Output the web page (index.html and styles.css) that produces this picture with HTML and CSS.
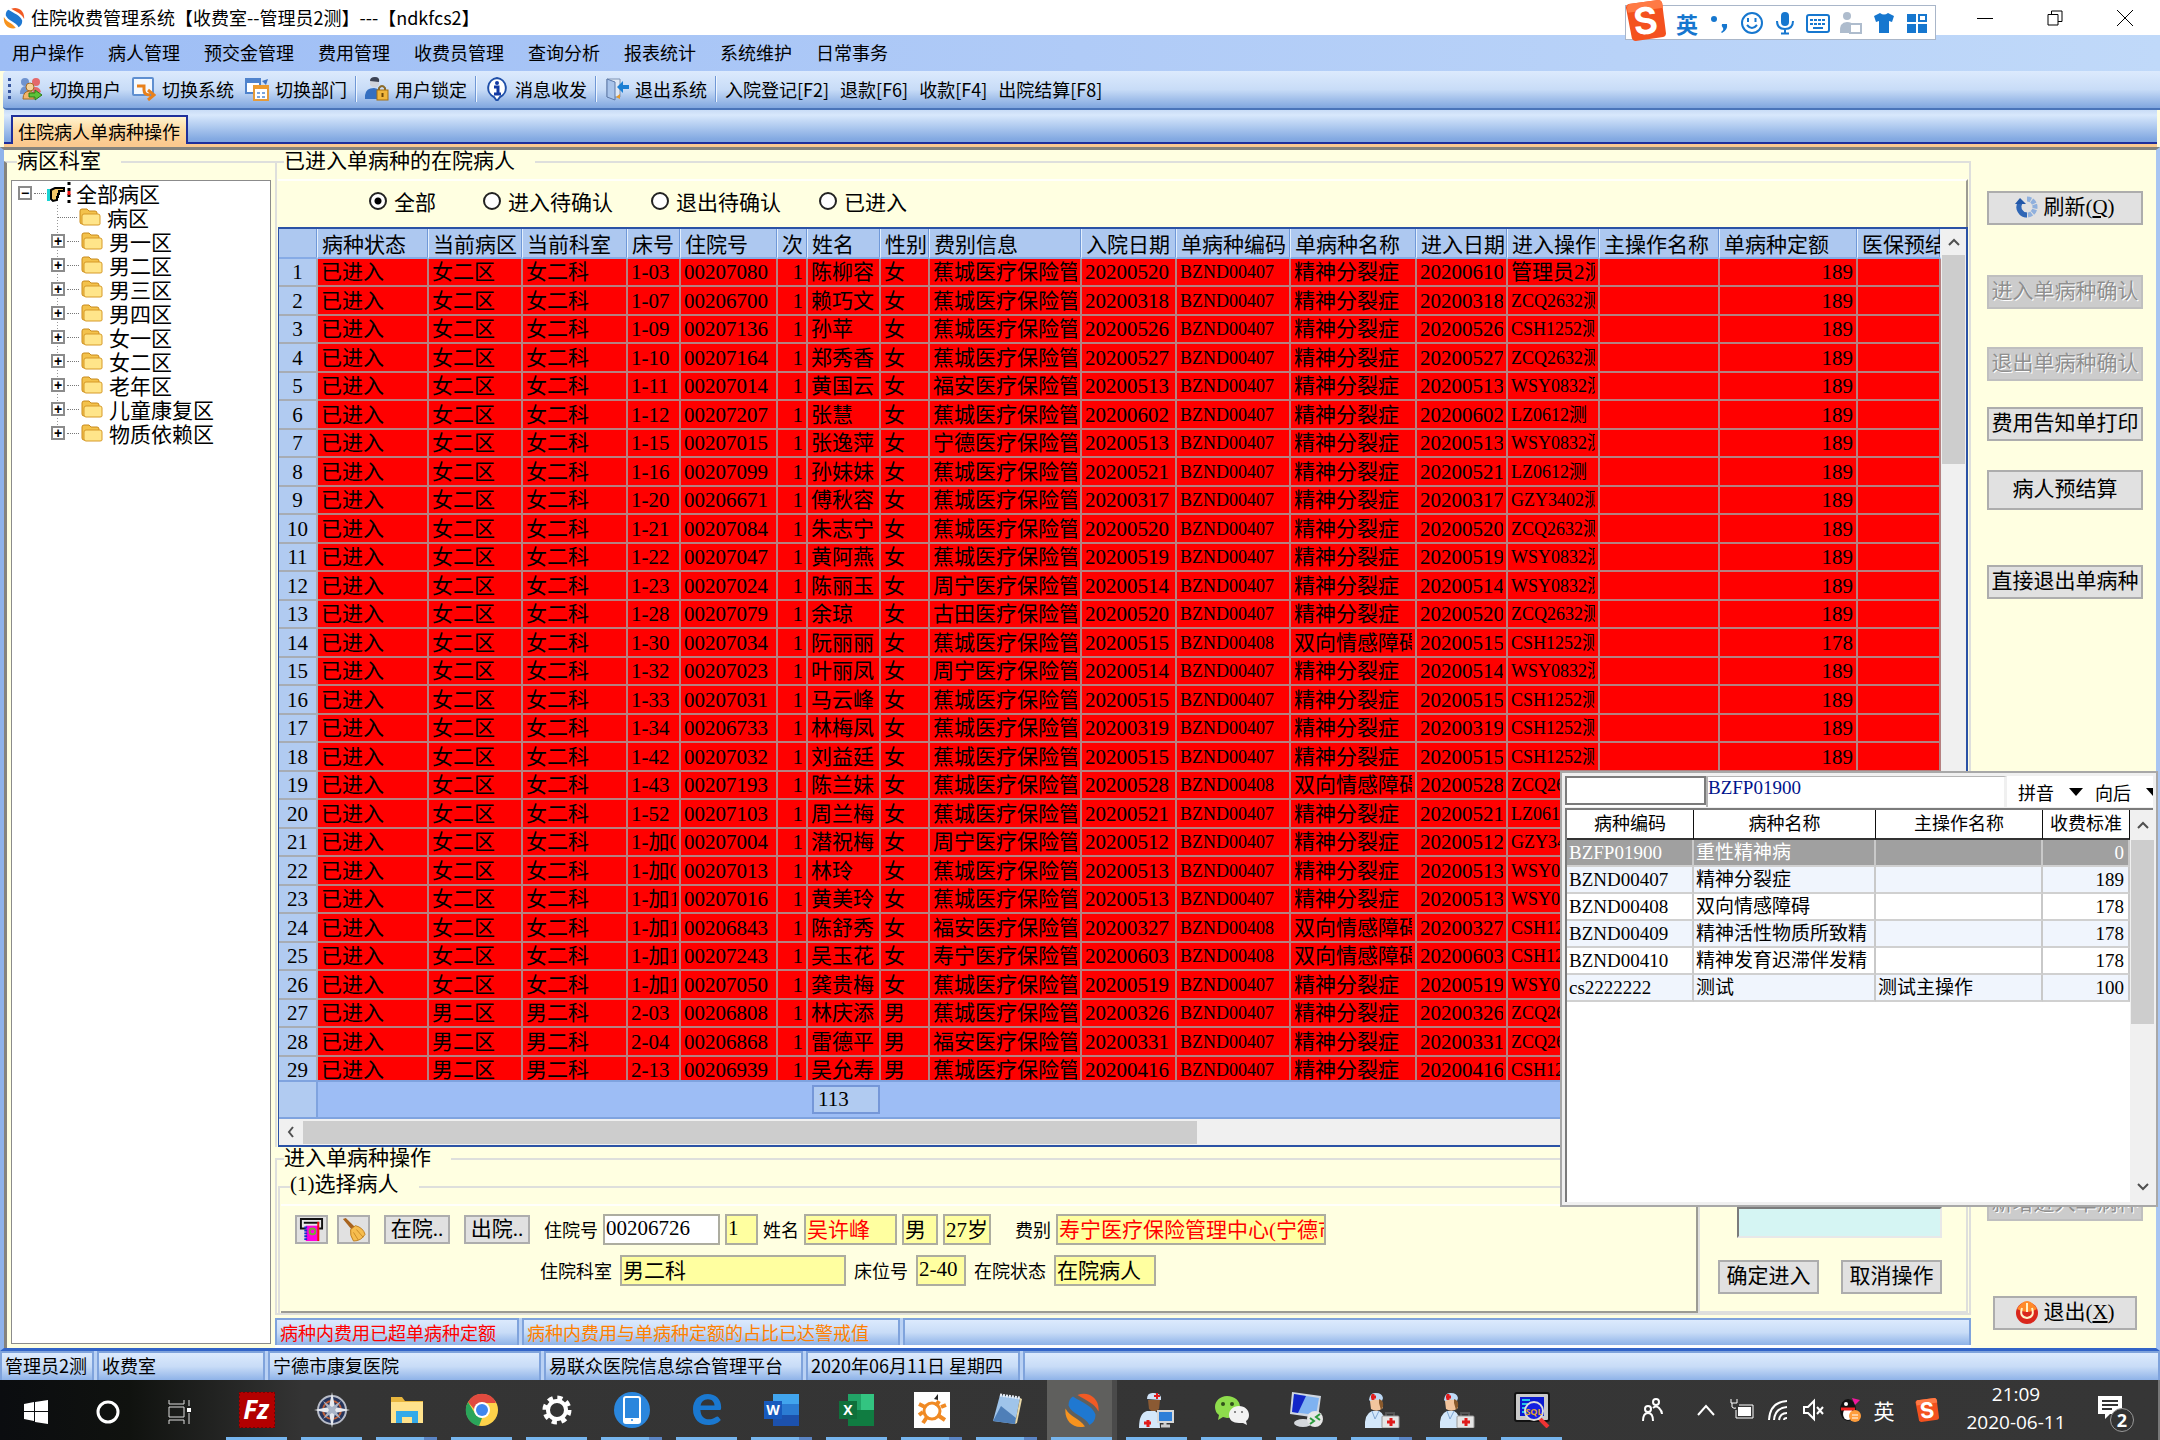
FILE: index.html
```html
<!DOCTYPE html>
<html lang="zh-CN">
<head>
    <meta charset="UTF-8">
    <meta name="viewport" content="width=device-width, initial-scale=1.0">
    <title>住院收费管理系统</title>
    <link rel="stylesheet" href="styles.css">
</head>
<body>
    <!-- shared symbols -->
    <svg class="defs" width="0" height="0" aria-hidden="true">
        <symbol id="i-app" viewBox="0 0 24 24">
            <path d="M9 2C16-1 24 4 23 13c-3-6-8-7-14-11z" fill="#f15a24"/>
            <path d="M6 3c6 4 13 6 15 12 0 4-2 6-4 7C14 16 5 15 3 9c0-3 1-5 3-6z" fill="#1f78d1"/>
            <path d="M1 11c3 6 9 6 13 12C6 25 0 19 1 11z" fill="#f7931e"/>
        </symbol>
        <symbol id="i-sogou" viewBox="0 0 42 42">
            <path d="M1 8Q1 5 4 4L34 0q3 0 4 3l4 31q0 3-3 4L11 42q-3 0-4-3z" fill="#f4511e"/>
            <path d="M2 8Q2 5 4 4L34 0q3 0 4 3l1 5L3 13z" fill="#ff7a45"/>
            <text x="21" y="35" font-size="38" font-weight="700" font-family="Inter, sans-serif" fill="#fff" text-anchor="middle" transform="rotate(-6 21 21)">S</text>
        </symbol>
        <symbol id="i-folder" viewBox="0 0 22 22">
            <path d="M1 5q0-2 2-2h5l2 2h6q2 0 2 2v11H3q-2 0-2-2z" fill="#f3c24c" stroke="#c98a1b"/>
            <path d="M5 8h14q2 0 2 2v8q0 1-2 1H5q-2 0-2-2v-7q0-2 2-2z" fill="#ffe58a" stroke="#d79a28"/>
        </symbol>
        <symbol id="i-nurse" viewBox="0 0 36 36">
            <path d="M5 8Q6 0 12 1q6 0 7 5l-1 3H6z" fill="#bcd8f5"/>
            <path d="M7 5h5M9 2v6" stroke="#e01b1b" stroke-width="3"/>
            <path d="M6 9q6-3 12 0l1 7q-6 5-12 1z" fill="#f1c49d"/>
            <path d="M15 7q5 1 4 8l-2 3-2-7z" fill="#8a5a2c"/>
            <path d="M1 36q-1-14 7-17h7q7 3 6 17z" fill="#d3e7fa"/>
            <path d="M8 19l3 8 4-8" fill="none" stroke="#7fa6d2"/>
            <path d="M22 24v-3h8v3" fill="none" stroke="#555" stroke-width="2"/>
            <rect x="18" y="24" width="17" height="12" rx="1" fill="#e6e6e6" stroke="#999"/>
            <path d="M23 30h8M27 26v8" stroke="#e01b1b" stroke-width="3"/>
        </symbol>
    </svg>

    <div class="app">
        <header class="titlebar">
            <svg class="title-icon"><use href="#i-app"/></svg>
            <h1>住院收费管理系统【收费室--管理员2测】---【ndkfcs2】</h1>
            <div class="window-buttons">
                <button type="button" aria-label="最小化"><svg viewBox="0 0 16 16"><path d="M0 8.500h16"/></svg></button>
                <button type="button" aria-label="还原"><svg viewBox="0 0 16 16"><path d="M1 4.500h10v10.500H1zM4.500 4V1H15v10.500h-4"/></svg></button>
                <button type="button" aria-label="关闭"><svg viewBox="0 0 16 16"><path d="M0 0l16 16M16 0L0 16"/></svg></button>
            </div>
        </header>

        <div class="ime-bar">
            <svg class="ime-logo"><use href="#i-sogou"/></svg>
            <span class="ime-lang">英</span>
            <svg viewBox="0 0 24 24"><circle cx="7" cy="8" r="3"/><path d="M15 13h5q1 6-5 9l-1-1q3-2 2-4-2-2-1-4z"/></svg>
            <svg viewBox="0 0 24 24"><circle cx="12" cy="12" r="10" fill="none" stroke="#1677cf" stroke-width="2"/><path d="M8 7v4M15.500 7v4M7 14q5 6 10 0" fill="none" stroke="#1677cf" stroke-width="2"/></svg>
            <svg viewBox="0 0 24 24"><rect x="8" y="1" width="8" height="14" rx="4"/><path d="M4 10q0 8 8 8t8-8M12 18v4M8 22.500h8" fill="none" stroke="#1677cf" stroke-width="2"/></svg>
            <svg viewBox="0 0 24 24"><rect x="1" y="4" width="22" height="17" rx="2" fill="none" stroke="#1677cf" stroke-width="2"/><path d="M4 9h16M4 13h16" stroke="#1677cf" stroke-width="2" stroke-dasharray="3 1"/><path d="M7 17h10" stroke="#1677cf" stroke-width="2"/></svg>
            <svg viewBox="0 0 24 24" class="ime-off"><circle cx="8" cy="5" r="4"/><path d="M1 22q-1-11 7-11 5 0 6 3v8z"/><path d="M11 13h11v9H11z" fill="#fff" stroke="#aebccd" stroke-width="2"/></svg>
            <svg viewBox="0 0 24 24"><path d="M2 5l6-3q4 3 8 0l6 3-2 6-3-1v12H7V10l-3 1z"/></svg>
            <svg viewBox="0 0 24 24"><path d="M2 3h9v8H2zM2 13h9v9H2zM13 13h9v9h-9z"/><path d="M14 4h7v6h-7z" fill="none" stroke="#1677cf" stroke-width="2"/></svg>
        </div>

        <nav class="menubar">
            <a href="#">用户操作</a>
            <a href="#">病人管理</a>
            <a href="#">预交金管理</a>
            <a href="#">费用管理</a>
            <a href="#">收费员管理</a>
            <a href="#">查询分析</a>
            <a href="#">报表统计</a>
            <a href="#">系统维护</a>
            <a href="#">日常事务</a>
        </nav>

        <div class="toolbar">
            <span class="grip"></span>
            <button type="button">
                <svg viewBox="0 0 24 24"><circle cx="6" cy="5" r="4" fill="#6f93cf"/><path d="M1 17q0-8 6-8l4 8z" fill="#6f93cf"/><circle cx="17" cy="5" r="4" fill="#e4696b"/><path d="M12 11q8-3 10 4l-6 3z" fill="#e4696b"/><circle cx="11" cy="10" r="4" fill="#f6d59c" stroke="#a36a25"/><path d="M4 22q0-8 7-8l4 2v6z" fill="#f2b56b" stroke="#a36a25"/><path d="M10 16h6v-3l7 5-7 5v-3h-6z" fill="#5cc238" stroke="#2c7a17"/></svg>
                切换用户
            </button>
            <button type="button">
                <svg viewBox="0 0 24 24"><rect x="1" y="1" width="20" height="17" rx="1" fill="#f4f9ff" stroke="#5f8fd0" stroke-width="2"/><path d="M5 9h7v4q0 5 6 5M16 13l6 5-6 5" fill="none" stroke="#e8801a" stroke-width="3"/></svg>
                切换系统
            </button>
            <button type="button">
                <svg viewBox="0 0 24 24"><rect x="1" y="2" width="14" height="14" fill="#fff" stroke="#4f83cc" stroke-width="2"/><path d="M1 4h14" stroke="#4f83cc" stroke-width="4"/><path d="M17 4l6-2-2 6" fill="#3f74c4"/><rect x="9" y="9" width="14" height="14" fill="#fff" stroke="#e49a3a" stroke-width="2"/><path d="M9 10h14" stroke="#ee9b2d" stroke-width="4"/><path d="M12 16h3M17 16h3M12 20h3M17 20h3" stroke="#7aa5de" stroke-width="2"/></svg>
                切换部门
            </button>
            <i class="sep"></i>
            <button type="button">
                <svg viewBox="0 0 24 24"><path d="M5 2q5-4 9 1v5q-4 5-9 0z" fill="#cfd3dc"/><path d="M5 4q0-4 5-4t4 5z" fill="#3b4254"/><path d="M0 22q-1-11 9-11 7 0 8 11z" fill="#356fc0"/><path d="M14 14v-3q3-4 6 0v3" fill="none" stroke="#8a6a2a" stroke-width="2"/><rect x="12" y="13" width="11" height="10" fill="#f0b63c" stroke="#a36f13"/><path d="M17.500 16v4" stroke="#6b4708" stroke-width="2"/></svg>
                用户锁定
            </button>
            <i class="sep"></i>
            <button type="button">
                <svg viewBox="0 0 24 24"><path d="M12 1a10 10 0 0 1 3 19l-3 4-3-4A10 10 0 0 1 12 1z" fill="#fff" stroke="#1f4fa8" stroke-width="2"/><circle cx="12" cy="6" r="2" fill="#1239a3"/><path d="M9 10h4v7M9 17h7" fill="none" stroke="#1239a3" stroke-width="3"/></svg>
                消息收发
            </button>
            <i class="sep"></i>
            <button type="button">
                <svg viewBox="0 0 24 24"><path d="M2 2h13v18H2z" fill="#dfe8f5" stroke="#7f93b3"/><path d="M2 2l8 3v18l-8-3z" fill="#a9c4ea" stroke="#5c79a8"/><path d="M12 10l6-6v4h6v4h-6v4z" fill="#1b7fd4"/><path d="M11 20l4-3v5z" fill="#e39a2d"/></svg>
                退出系统
            </button>
            <i class="sep"></i>
            <button type="button">入院登记[F2]</button>
            <button type="button">退款[F6]</button>
            <button type="button">收款[F4]</button>
            <button type="button">出院结算[F8]</button>
        </div>

        <div class="tabstrip">
            <button type="button" class="tab">住院病人单病种操作</button>
        </div>

        <main class="workspace">
            <fieldset class="group wards">
                <legend>病区科室</legend>
                <div class="tree">
                    <div class="tree-root">
                        <button type="button" class="toggle" aria-label="收起">−</button>
                        <i class="dots"></i>
                        <svg class="hand" viewBox="0 0 26 24"><path d="M1 8h3v12H1z" fill="#19d3d3"/><path d="M5 9l4-2h9v3h-5v3h-1v3h-1v3l-4 1-2-2z" fill="#f5c86a" stroke="#000" stroke-width="2"/><path d="M23 1v22" stroke="#000" stroke-width="3" stroke-dasharray="3 3"/><path d="M23 10v4" stroke="#e11" stroke-width="3"/></svg>
                        <span>全部病区</span>
                    </div>
                    <ul id="ward-list"></ul>
                </div>
            </fieldset>

            <section class="center">
                <fieldset class="group patients">
                    <legend>已进入单病种的在院病人</legend>
                    <div class="filters">
                        <label><input type="radio" name="state" checked>全部</label>
                        <label><input type="radio" name="state">进入待确认</label>
                        <label><input type="radio" name="state">退出待确认</label>
                        <label><input type="radio" name="state">已进入</label>
                    </div>
                    <div class="grid">
                        <div class="grid-body">
                            <div class="grid-rows">
                                <div class="table-wrap">
                                    <table class="patient-table">
                                        <colgroup>
                                            <col class="c-idx"><col class="c-state"><col class="c-ward"><col class="c-dept"><col class="c-bed"><col class="c-no"><col class="c-times"><col class="c-name"><col class="c-sex"><col class="c-fee"><col class="c-date"><col class="c-code"><col class="c-disease"><col class="c-date2"><col class="c-oper"><col class="c-main"><col class="c-quota"><col class="c-pre">
                                        </colgroup>
                                        <thead>
                                            <tr><th></th><th>病种状态</th><th>当前病区</th><th>当前科室</th><th>床号</th><th>住院号</th><th>次</th><th>姓名</th><th>性别</th><th>费别信息</th><th>入院日期</th><th>单病种编码</th><th>单病种名称</th><th>进入日期</th><th>进入操作</th><th>主操作名称</th><th>单病种定额</th><th>医保预结</th></tr>
                                        </thead>
                                        <tbody id="patient-rows"></tbody>
                                    </table>
                                </div>
                                <div class="grid-footer">
                                    <span class="footer-head"></span>
                                    <output class="count">113</output>
                                </div>
                            </div>
                            <div class="vscroll">
                                <svg viewBox="0 0 12 12"><path d="M1 9l5-5 5 5"/></svg>
                                <span class="vthumb"></span>
                            </div>
                        </div>
                        <div class="hscroll">
                            <svg viewBox="0 0 12 12"><path d="M8 1L4 6l4 5"/></svg>
                            <span class="hthumb"></span>
                        </div>
                    </div>
                </fieldset>

                <fieldset class="group entry">
                    <legend>进入单病种操作</legend>
                    <div class="entry-body">
                        <fieldset class="group pick">
                            <legend>(1)选择病人</legend>
                            <form class="pick-form">
                                <div class="form-row">
                                    <div class="tool-pair">
                                        <button type="button" class="btn icon-btn" aria-label="读卡">
                                            <svg viewBox="0 0 24 26"><path d="M1 2h22v10H1z" fill="#e8e8e8" stroke="#111" stroke-width="2"/><path d="M4 6h16" stroke="#111" stroke-width="2"/><path d="M6 9h14v16H6z" fill="#f0d"/><path d="M6 10v15" stroke="#13c" stroke-width="3" stroke-dasharray="2 1"/><path d="M19 5v20" stroke="#e11" stroke-width="2"/><circle cx="13" cy="15" r="3" fill="none" stroke="#7a3" stroke-width="2"/></svg>
                                        </button>
                                        <button type="button" class="btn icon-btn" aria-label="清空">
                                            <svg viewBox="0 0 26 26"><path d="M2 2l3-1 9 9-3 3z" fill="#a8641f"/><path d="M10 13l5-4q8 2 10 9-4 7-12 7-4-6-3-12z" fill="#f6bd4e" stroke="#c07f1c"/><path d="M13 16l5 8M16 13l7 8" stroke="#c98a26"/></svg>
                                        </button>
                                    </div>
                                    <div class="tool-pair wide">
                                        <button type="button" class="btn">在院..</button>
                                        <button type="button" class="btn">出院..</button>
                                    </div>
                                    <div class="fields">
                                        <label for="inp-no">住院号</label>
                                        <input id="inp-no" class="box white w-no" value="00206726">
                                        <input class="box w-times" value="1" aria-label="住院次数" readonly>
                                        <label for="inp-name">姓名</label>
                                        <input id="inp-name" class="box red w-name" value="吴许峰" readonly>
                                        <input class="box w-sex" value="男" aria-label="性别" readonly>
                                        <input class="box w-age" value="27岁" aria-label="年龄" readonly>
                                    </div>
                                    <div class="fields">
                                        <label for="inp-fee">费别</label>
                                        <input id="inp-fee" class="box red w-fee" value="寿宁医疗保险管理中心(宁德市)" readonly>
                                    </div>
                                </div>
                                <div class="form-row second">
                                    <label for="inp-dept">住院科室</label>
                                    <input id="inp-dept" class="box w-dept" value="男二科" readonly>
                                    <label for="inp-bed">床位号</label>
                                    <input id="inp-bed" class="box w-bed" value="2-40" readonly>
                                    <label for="inp-state">在院状态</label>
                                    <input id="inp-state" class="box w-state" value="在院病人" readonly>
                                </div>
                            </form>
                        </fieldset>
                        <div class="confirm">
                            <input class="disease-input" aria-label="病种">
                            <div class="confirm-buttons">
                                <button type="button" class="btn">确定进入</button>
                                <button type="button" class="btn">取消操作</button>
                            </div>
                        </div>
                    </div>
                </fieldset>

                <div class="legend-strip">
                    <span class="pane over">病种内费用已超单病种定额</span>
                    <span class="pane warn">病种内费用与单病种定额的占比已达警戒值</span>
                    <span class="pane rest"></span>
                </div>
            </section>

            <aside class="actions">
                <button type="button" class="btn">
                    <svg viewBox="0 0 24 24"><path d="M12 4a8 8 0 1 1-8 8" fill="none" stroke="#8fb0dd" stroke-width="5" stroke-dasharray="4 1"/><path d="M12 20a8 8 0 0 1-7-12" fill="none" stroke="#2f66b5" stroke-width="5"/><path d="M0 9l5-6 6 6z" fill="#2257a8"/></svg>
                    刷新(<u>Q</u>)
                </button>
                <button type="button" class="btn" disabled>进入单病种确认</button>
                <button type="button" class="btn" disabled>退出单病种确认</button>
                <button type="button" class="btn">费用告知单打印</button>
                <button type="button" class="btn tall">病人预结算</button>
                <button type="button" class="btn">直接退出单病种</button>
                <div class="actions-end">
                    <button type="button" class="btn" disabled>新增进入单病种</button>
                    <button type="button" class="btn exit">
                        <svg viewBox="0 0 24 24"><circle cx="12" cy="13" r="11" fill="#d9261c"/><path d="M2 9q10-16 20 0-10 6-20 0z" fill="#ff8a2a"/><path d="M7 8q-3 9 5 10 8-1 5-10M12 3v9" fill="none" stroke="#fff3c8" stroke-width="2"/></svg>
                        退出(<u>X</u>)
                    </button>
                </div>
            </aside>

            <!-- disease lookup, floats over the grid -->
            <div class="lookup">
                <div class="lookup-head">
                    <input class="lookup-input" aria-label="检索" autofocus>
                    <span class="lookup-code">BZFP01900</span>
                    <label class="drop"><select aria-label="检索方式"><option>拼音</option></select></label>
                    <label class="drop"><select aria-label="检索方向"><option>向后</option></select></label>
                </div>
                <div class="lookup-list">
                    <table class="lookup-table">
                        <thead>
                            <tr><th class="l-code">病种编码</th><th class="l-name">病种名称</th><th class="l-main">主操作名称</th><th class="l-std">收费标准</th></tr>
                        </thead>
                        <tbody>
                            <tr class="selected"><td>BZFP01900</td><td>重性精神病</td><td></td><td class="num">0</td></tr>
                            <tr><td>BZND00407</td><td>精神分裂症</td><td></td><td class="num">189</td></tr>
                            <tr><td>BZND00408</td><td>双向情感障碍</td><td></td><td class="num">178</td></tr>
                            <tr><td>BZND00409</td><td>精神活性物质所致精</td><td></td><td class="num">178</td></tr>
                            <tr><td>BZND00410</td><td>精神发育迟滞伴发精</td><td></td><td class="num">178</td></tr>
                            <tr><td>cs2222222</td><td>测试</td><td>测试主操作</td><td class="num">100</td></tr>
                        </tbody>
                    </table>
                    <div class="vscroll">
                        <svg viewBox="0 0 12 12"><path d="M1 9l5-5 5 5"/></svg>
                        <span class="vthumb"></span>
                        <svg class="down" viewBox="0 0 12 12"><path d="M1 3l5 5 5-5"/></svg>
                    </div>
                </div>
            </div>
        </main>

        <footer class="statusbar">
            <span class="pane s-user">管理员2测</span>
            <span class="pane s-room">收费室</span>
            <span class="pane s-hosp">宁德市康复医院</span>
            <span class="pane s-plat">易联众医院信息综合管理平台</span>
            <span class="pane s-date">2020年06月11日 星期四</span>
            <span class="pane rest"></span>
        </footer>

        <div class="taskbar">
            <div class="task-sys">
                <button type="button" aria-label="开始"><svg viewBox="0 0 24 24"><path d="M0 4l10-2v9H0zM11 2l13-2v11H11zM0 12h10v9L0 19zM11 12h13v12l-13-2z" fill="#fff"/></svg></button>
                <button type="button" aria-label="Cortana"><svg viewBox="0 0 24 24"><circle cx="12" cy="12" r="10" fill="none" stroke="#fff" stroke-width="3"/></svg></button>
                <button type="button" aria-label="任务视图"><svg viewBox="0 0 24 24"><path d="M1 0v4h15V0M1 24v-4h15v4M1 7h15v10H1zM21 0v6M21 13v11" fill="none" stroke="#ddd" stroke-width="1"/><path d="M19 8h4v4h-4z" fill="#fff"/></svg></button>
            </div>
            <div class="task-apps">
                <button type="button" aria-label="FileZilla"><svg viewBox="0 0 36 36"><rect width="36" height="36" fill="#b30000"/><rect width="36" height="36" fill="none" stroke="#7a0000" stroke-width="2" stroke-dasharray="2 2"/><text x="17" y="27" font-size="26" font-weight="700" font-style="italic" font-family="Open Sans, sans-serif" fill="#fff" text-anchor="middle">Fz</text></svg></button>
                <button type="button" aria-label="导航"><svg viewBox="0 0 36 36"><circle cx="18" cy="18" r="14" fill="#26355c" stroke="#b8bcc8" stroke-width="2"/><circle cx="18" cy="18" r="9" fill="none" stroke="#c0603a" stroke-width="2"/><path d="M18 0l3 15 15 3-15 3-3 15-3-15-15-3 15-3z" fill="#e6e9ef"/><path d="M9 9l9 6 9-6-6 9 6 9-9-6-9 6 6-9z" fill="#a9b4c8"/></svg></button>
                <button type="button" class="multi" aria-label="文件资源管理器"><svg viewBox="0 0 36 36"><path d="M2 5h11l3 4h18v22H2z" fill="#e8b63e"/><path d="M2 10h32v21H2z" fill="#ffe28c"/><path d="M7 19h22v12h-6v-6H13v6H7z" fill="#35a9e8"/></svg></button>
                <button type="button" aria-label="Chrome"><svg viewBox="0 0 36 36"><circle cx="18" cy="18" r="16" fill="#fdd24a"/><path d="M4 10a16 16 0 0 1 28 0l-1 1H18l-7 7z" fill="#e04a3f"/><path d="M4 10l8 13 6 3-3 8A16 16 0 0 1 4 10z" fill="#2aa55a"/><circle cx="18" cy="18" r="8" fill="#fff"/><circle cx="18" cy="18" r="6" fill="#3f86ee"/></svg></button>
                <button type="button" aria-label="设置"><svg viewBox="0 0 36 36"><circle cx="18" cy="18" r="9" fill="none" stroke="#fff" stroke-width="4"/><circle cx="18" cy="18" r="12" fill="none" stroke="#fff" stroke-width="5" stroke-dasharray="5 4.420"/></svg></button>
                <button type="button" class="multi" aria-label="手机助手"><svg viewBox="0 0 36 36"><circle cx="18" cy="18" r="18" fill="#2a86dd"/><rect x="10" y="5" width="16" height="26" rx="2" fill="#2a86dd" stroke="#fff" stroke-width="2"/><path d="M10 26h16v4H10z" fill="#fff"/><circle cx="18" cy="28" r="1" fill="#2a86dd"/></svg></button>
                <button type="button" aria-label="Edge"><svg viewBox="0 0 36 36"><text x="18" y="33" font-size="60" font-weight="700" font-family="Lato, sans-serif" fill="#1a78d0" text-anchor="middle">e</text></svg></button>
                <button type="button" class="multi" aria-label="Word"><svg viewBox="0 0 36 36"><path d="M9 2h26v11H9z" fill="#41a5ee"/><path d="M9 12h26v12H9z" fill="#2b7cd3"/><path d="M9 23h26v11H9z" fill="#1c51ac"/><rect y="9" width="18" height="18" fill="#185abd"/><text x="9" y="23" font-size="14" font-weight="700" font-family="Open Sans, sans-serif" fill="#fff" text-anchor="middle">W</text></svg></button>
                <button type="button" aria-label="Excel"><svg viewBox="0 0 36 36"><path d="M9 2h26v32H9z" fill="#21a366"/><path d="M9 18h26v16H9z" fill="#107c41"/><path d="M22 2h13v16H22z" fill="#33c481"/><rect y="9" width="18" height="18" fill="#0f703b"/><text x="9" y="23" font-size="14" font-weight="700" font-family="Open Sans, sans-serif" fill="#fff" text-anchor="middle">X</text></svg></button>
                <button type="button" class="multi" aria-label="工具"><svg viewBox="0 0 36 36"><rect width="36" height="36" fill="#fff"/><circle cx="18" cy="19" r="8" fill="none" stroke="#f08a24" stroke-width="3"/><path d="M5 12l6 3M9 31l4-6M31 28l-6-4M25 9l-3 5M9 20l-4 3M27 15l5-2" stroke="#f08a24" stroke-width="4"/><path d="M20 7l4-5v6z" fill="#222"/></svg></button>
                <button type="button" class="multi" aria-label="记事本"><svg viewBox="0 0 36 36"><path d="M11 3l20 3-5 26-22-3z" fill="#9fc4ea"/><path d="M4 29l8-15 15 12-1 6z" fill="#4f7fb8"/><path d="M31 6l2 1-5 24-2 1z" fill="#e9d9a8"/><path d="M11 3l20 3" stroke="#e8eef6" stroke-width="3" stroke-dasharray="2 1"/></svg></button>
                <button type="button" class="active" aria-label="住院收费"><svg><use href="#i-app"/></svg></button>
                <button type="button" aria-label="医生站"><svg viewBox="0 0 36 36"><path d="M8 7Q8 0 15 1q8 0 7 7z" fill="#cfe2f7"/><path d="M15 4h6M18 1v6" stroke="#e01b1b" stroke-width="2"/><path d="M9 8h12l-1 9q-5 5-10 0z" fill="#8b5a33"/><path d="M0 36q0-15 8-17h8q5 2 5 17z" fill="#d3e7fa"/><path d="M5 31h7M9 28v7" stroke="#e01b1b" stroke-width="3"/><rect x="18" y="18" width="17" height="13" fill="#d8d8d8"/><rect x="20" y="20" width="13" height="9" fill="#2e7fd8"/><path d="M22 34h9M26 31v3" stroke="#ccc" stroke-width="3"/></svg></button>
                <button type="button" aria-label="微信"><svg viewBox="0 0 36 36"><path d="M13 4c8 0 13 5 13 11s-5 11-13 11l-4-1-5 3 1-5q-4-3-4-8C1 9 6 4 13 4z" fill="#8edc4c"/><path d="M25 14c6 0 10 4 10 9q0 4-3 6l1 4-4-2h-4c-6 0-10-3-10-8s4-9 10-9z" fill="#f2f2f2"/><circle cx="9" cy="12" r="2" fill="#31511a"/><circle cx="18" cy="12" r="2" fill="#31511a"/><circle cx="21" cy="20" r="1" fill="#666"/><circle cx="28" cy="20" r="1" fill="#666"/></svg></button>
                <button type="button" aria-label="远程桌面"><svg viewBox="0 0 36 36"><path d="M3 0l29 4-3 22L1 22z" fill="#cfd6e0"/><path d="M5 2l25 4-3 17-24-3z" fill="#7fb2f0"/><path d="M5 2l12 2-8 17-6-1z" fill="#1226c8"/><ellipse cx="14" cy="31" rx="9" ry="4" fill="#d5d8dc"/><circle cx="26" cy="27" r="8" fill="#e6e6e6"/><path d="M21 26l4 3-4 3M31 22l-4 3 4 3" fill="none" stroke="#2b9a3c" stroke-width="2"/></svg></button>
                <button type="button" class="multi" aria-label="护士站一"><svg><use href="#i-nurse"/></svg></button>
                <button type="button" aria-label="护士站二"><svg><use href="#i-nurse"/></svg></button>
                <button type="button" aria-label="SQL"><svg viewBox="0 0 36 36"><rect x="1" y="1" width="34" height="28" rx="2" fill="#c9c9c9" stroke="#111" stroke-width="2"/><rect x="6" y="5" width="24" height="19" fill="#0a1ad0"/><path d="M8 8h8M8 12h6M8 16h5M8 20h5" stroke="#22c4e8" stroke-width="2"/><path d="M26 27l8 8" stroke="#e33" stroke-width="4"/><circle cx="20" cy="19" r="9" fill="#1420e0" stroke="#ddd" stroke-width="2"/><text x="20" y="23" font-size="9" font-weight="700" font-family="Open Sans, sans-serif" fill="#e5a530" text-anchor="middle">SQL</text></svg></button>
            </div>
            <div class="tray">
                <svg class="people" viewBox="0 0 24 24"><g fill="none" stroke="#fff" stroke-width="2"><circle cx="8" cy="11" r="3"/><path d="M3 23q0-8 5-8t5 8"/><circle cx="16" cy="4" r="3"/><path d="M13 10q3-3 6 0 3 3 3 6"/></g></svg>
                <svg viewBox="0 0 24 24"><path d="M4 17l8-9 8 9" fill="none" stroke="#fff" stroke-width="2"/></svg>
                <svg viewBox="0 0 24 24"><path d="M8 9h13v9H8z" fill="#fff"/><path d="M6 12v8h17V7H9M1 1v4h6V1M2 5v4q2 2 4 1" fill="none" stroke="#fff" stroke-width="1"/></svg>
                <svg viewBox="0 0 24 24"><g fill="none" stroke="#fff" stroke-width="2"><path d="M3 22Q4 4 21 3M8 22q1-12 13-13M13 22q1-7 8-7"/><path d="M18 22q0-2 3-2"/></g></svg>
                <svg viewBox="0 0 24 24"><path d="M2 9h4l6-6v18l-6-6H2zM15 9l6 7M21 9l-6 7" fill="none" stroke="#fff" stroke-width="2"/></svg>
                <svg viewBox="0 0 24 24"><ellipse cx="10" cy="12" rx="8" ry="11" fill="#111"/><ellipse cx="10" cy="16" rx="5" ry="6" fill="#fff"/><circle cx="8" cy="6" r="2" fill="#fff"/><path d="M3 11h14" stroke="#e22" stroke-width="3"/><path d="M14 0l8 2-5 5z" fill="#f0169c"/><circle cx="17" cy="18" r="6" fill="#ff9d3c"/><path d="M14 17h6M14 20h6" stroke="#fff" stroke-width="1"/></svg>
                <span class="tray-lang">英</span>
                <svg class="tray-sogou"><use href="#i-sogou"/></svg>
                <div class="clock"><time>21:09</time><time>2020-06-11</time></div>
                <button type="button" class="notify" aria-label="通知">
                    <svg viewBox="0 0 24 24"><path d="M0 0h24v18H12l-5 5v-5H0z" fill="#fff"/><path d="M4 5h16M4 9h16M4 13h10" stroke="#333" stroke-width="2"/></svg>
                    <span class="badge">2</span>
                </button>
            </div>
        </div>
    </div>

    <script src="script.js"></script>
</body>
</html>
```

FILE: styles.css
```css
* {
    margin: 0;
    padding: 0;
    box-sizing: border-box;
}

body {
    font-family: "Noto Sans CJK SC", sans-serif;
    font-size: 18px;
    color: #000;
    background: #fffee0;
}

button, input, select {
    font: inherit;
    color: inherit;
}

button {
    background: none;
    border: none;
    white-space: nowrap;
}

a {
    color: inherit;
    text-decoration: none;
}

.defs {
    position: absolute;
}

.app {
    position: relative;
    height: 100vh;
    display: flex;
    flex-direction: column;
    overflow: hidden;
}

/* title bar */
.titlebar {
    height: 35px;
    flex: none;
    display: flex;
    align-items: center;
    padding-left: 3px;
    background: #fff;
}

.title-icon {
    width: 22px;
    height: 22px;
    margin-right: 6px;
}

.titlebar h1 {
    flex: 1;
    font-size: 18px;
    font-weight: 400;
    line-height: 28px;
    padding-bottom: 2px;
}

.window-buttons {
    display: flex;
}

.window-buttons button {
    width: 70px;
    height: 35px;
}

.window-buttons svg {
    width: 16px;
    height: 16px;
    fill: none;
    stroke: #000;
}

.ime-bar {
    position: absolute;
    top: 5px;
    right: 224px;
    height: 35px;
    padding: 0 6px 0 50px;
    display: flex;
    align-items: center;
    gap: 9px;
    background: #fff;
    border: 1px solid #a9b6c9;
    fill: #1677cf;
    z-index: 2;
}

.ime-bar svg {
    width: 24px;
    height: 24px;
}

.ime-bar .ime-logo {
    position: absolute;
    left: -1px;
    top: -6px;
    width: 41px;
    height: 41px;
}

.ime-lang {
    font-size: 22px;
    font-weight: 700;
    line-height: 24px;
    color: #1677cf;
}

.ime-bar .ime-off {
    fill: #aebccd;
}

/* menu and toolbar */
.menubar {
    height: 36px;
    flex: none;
    display: flex;
    align-items: center;
    gap: 24px;
    padding: 0 12px 2px;
    background: linear-gradient(90deg, #9dbdf5, #b0cbf7 50%, #c0d9f9);
}

.toolbar {
    height: 39px;
    flex: none;
    display: flex;
    align-items: center;
    gap: 11px;
    margin-left: 3px;
    padding: 0 5px 2px;
    background: linear-gradient(#dceafd, #c8dcf7 50%, #80a6df);
    border-bottom: 2px solid #4a74b9;
    border-radius: 4px 0 0 4px;
}

.toolbar button {
    display: flex;
    align-items: center;
    gap: 6px;
    height: 28px;
}

.toolbar svg {
    width: 24px;
    height: 24px;
}

.grip {
    width: 3px;
    height: 22px;
    margin-right: -3px;
    background: repeating-linear-gradient(#34549c 0 3px, transparent 3px 6px);
}

.sep {
    width: 2px;
    height: 26px;
    margin: 0 -3px;
    background: #6f98d6;
    border-right: 1px solid #eff6ff;
}

.tabstrip {
    height: 37px;
    flex: none;
    display: flex;
    align-items: flex-end;
    padding-left: 7px;
    margin: 0 3px 0 4px;
    background: linear-gradient(#c9dcf6, #d8e8fc 15%, #84aae2 85%, #7fa5de);
    border-bottom: 3px solid #fbc98f;
    box-shadow: inset 0 -2px #1e2f9b;
}

.tab {
    height: 29px;
    padding: 0 6px 0 5px;
    line-height: 24px;
    background: linear-gradient(#fff3cf, #fdd9a0 50%, #fbc98f);
    border: 2px solid #1e2f9b;
    border-bottom: none;
}

/* workspace */
.workspace {
    position: relative;
    flex: 1;
    min-height: 0;
    display: flex;
    background: #ffffe1;
    border: 4px solid #8fb3ea;
    border-top: 3px solid #85837c;
    border-right-color: #a9c6f2;
    border-bottom: 3px solid #3264c8;
}

.group {
    min-width: 0;
    border: 2px solid #dedfdc;
    font-size: 21px;
}

.group > legend {
    height: 24px;
    line-height: 19px;
    margin-left: 6px;
    padding-right: 20px;
}

.wards {
    flex: 0 0 271px;
    display: flex;
    border-width: 2px 0 0 3px;
    border-left-color: #85837c;
    padding: 6px 4px 4px;
}

.tree {
    flex: 1;
    background: #fff;
    border: 1px solid #8b8b8b;
    padding: 0 0 0 6px;
    line-height: 22px;
}

.tree-root, .tree li {
    height: 24px;
    display: flex;
    align-items: center;
}

.tree ul {
    list-style: none;
    margin-left: 33px;
    background: repeating-linear-gradient(#999 0 1px, #fff 1px 3px) 6px 0 / 1px calc(100% - 12px) no-repeat;
}

.toggle {
    width: 14px;
    height: 14px;
    border: 2px solid #8b8b8b;
    background: #fff;
    font: 700 14px/10px "Liberation Sans", sans-serif;
}

.dots {
    width: 12px;
    margin: 0 2px;
    border-top: 1px dotted #777;
}

.tree .dots.long {
    width: 19px;
    margin-left: 7px;
}

.hand {
    width: 26px;
    height: 24px;
    margin: 0 4px 0 -2px;
}

.tree li svg {
    width: 22px;
    height: 22px;
    margin-right: 6px;
}

.center {
    flex: 1;
    min-width: 0;
    display: flex;
    flex-direction: column;
}

.patients {
    flex: 1;
    min-height: 0;
    display: flex;
    flex-direction: column;
    border-bottom: none;
    padding: 0 1px;
}

.filters {
    flex: none;
    height: 48px;
    margin-top: 5px;
    display: flex;
    align-items: center;
    gap: 38px;
    padding-left: 91px;
    padding-bottom: 6px;
    border-top: 2px solid #fffffb;
    border-right: 2px solid #9c9c93;
}

.filters label {
    display: flex;
    align-items: center;
    gap: 7px;
    min-width: 76px;
}

.filters input {
    appearance: none;
    width: 18px;
    height: 18px;
    border: 2px solid #222;
    border-radius: 50%;
    background: #fff;
}

.filters input:checked {
    background: radial-gradient(circle, #000 3px, #fff 4px);
}

/* patient grid */
.grid {
    flex: 1;
    min-height: 0;
    display: flex;
    flex-direction: column;
    border: 2px solid #2b52a5;
    border-left-width: 1px;
}

.grid-body {
    flex: 1;
    min-height: 0;
    display: flex;
}

.grid-rows {
    flex: 1;
    min-width: 0;
    display: flex;
    flex-direction: column;
    background: #9dbdf5;
}

.table-wrap {
    flex: 1;
    min-height: 0;
    overflow: hidden;
}

.patient-table {
    width: 100%;
    table-layout: fixed;
    border-collapse: separate;
    border-spacing: 0;
    font-family: "Liberation Serif", "Noto Sans CJK SC", serif;
}

.patient-table th {
    height: 30px;
    line-height: 28px;
    font-weight: 400;
    font-family: "Noto Sans CJK SC", sans-serif;
    text-align: left;
    white-space: nowrap;
    overflow: hidden;
    padding-left: 4px;
    background: #adc8f0;
    border-right: 1px solid #e3effd;
    border-bottom: 2px solid #86abe6;
    box-shadow: inset -1px 0 #6f98d8;
}

.patient-table td {
    height: 28px;
    padding: 0 3px;
    line-height: 26px;
    background: #f00;
    border-right: 2px solid #b68080;
    border-bottom: 2px solid #b68080;
}

.patient-table tr:nth-child(even) td {
    height: 29px;
}

.patient-table td span {
    display: block;
    height: 26px;
    overflow: hidden;
    white-space: nowrap;
}

.patient-table td.idx {
    text-align: center;
    background: #b1cbf1;
    border-color: #a7acb4;
}

.num {
    text-align: right;
}

.code {
    font-size: 18px;
}

.c-idx { width: 39px; }
.c-state { width: 111px; }
.c-ward { width: 94px; }
.c-dept { width: 105px; }
.c-bed { width: 53px; }
.c-no { width: 97px; }
.c-times { width: 30px; }
.c-name { width: 73px; }
.c-sex { width: 49px; }
.c-fee { width: 152px; }
.c-date { width: 95px; }
.c-code { width: 114px; }
.c-disease { width: 126px; }
.c-date2 { width: 91px; }
.c-oper { width: 92px; }
.c-main { width: 120px; }
.c-quota { width: 138px; }

.grid-footer {
    flex: none;
    height: 39px;
    display: flex;
    align-items: center;
    border-top: 2px solid #7fa3df;
    border-bottom: 2px solid #7fa3df;
    font-family: "Liberation Serif", serif;
}

.footer-head {
    width: 39px;
    height: 35px;
    background: #b1cbf1;
    border-right: 2px solid #7fa3df;
}

.count {
    width: 68px;
    height: 29px;
    margin-left: 494px;
    padding-left: 4px;
    line-height: 25px;
    background: #b1cbf1;
    border: 2px solid #7597d8;
}

.vscroll {
    flex: none;
    width: 25px;
    display: flex;
    flex-direction: column;
    align-items: center;
    background: #f0f0f0;
}

.vscroll svg, .hscroll svg {
    width: 12px;
    height: 12px;
    fill: none;
    stroke: #505050;
    stroke-width: 2;
    flex: none;
}

.vscroll svg {
    margin: 7px 0;
}

.vthumb {
    width: 23px;
    height: 209px;
    background: #cdcdcd;
}

.hscroll {
    flex: none;
    height: 26px;
    display: flex;
    align-items: center;
    background: #f0f0f0;
}

.hscroll svg {
    margin: 0 6px;
}

.hthumb {
    width: 53%;
    height: 23px;
    background: #cdcdcd;
}

/* entry form */
.entry {
    flex: none;
    padding: 0 1px;
}

.entry-body {
    display: flex;
    padding-top: 4px;
}

.pick {
    flex: 1;
    border-bottom: none;
    padding: 5px 0 0 1px;
}

.pick > legend {
    margin-left: 9px;
    font-family: "Liberation Serif", "Noto Sans CJK SC", serif;
}

.pick-form {
    height: 109px;
    display: flex;
    flex-direction: column;
    gap: 10px;
    padding: 8px 14px 0;
    border: 2px solid #fffffb;
    border-left: none;
    border-right-color: #9c9c93;
    border-bottom-color: #9c9c93;
    font-size: 18px;
}

.form-row {
    display: flex;
    align-items: center;
    gap: 14px;
    height: 31px;
}

.form-row.second {
    gap: 8px;
    padding-left: 245px;
}

.form-row label {
    flex: none;
    padding-bottom: 2px;
}

.tool-pair {
    display: flex;
    gap: 9px;
}

.tool-pair.wide {
    gap: 14px;
}

.fields {
    display: flex;
    align-items: center;
    gap: 5px;
}

.btn {
    height: 34px;
    display: flex;
    align-items: center;
    justify-content: center;
    background: #e1e1e1;
    border: 2px solid #adadad;
    font-family: "Liberation Serif", "Noto Sans CJK SC", serif;
    font-size: 21px;
    line-height: 26px;
    padding-bottom: 2px;
}

.btn:disabled {
    background: #ccc;
    border-color: #bfbfbf;
    color: #8f8f8f;
    text-shadow: 1px 1px #fff;
}

.tool-pair .btn {
    width: 66px;
    height: 29px;
}

.tool-pair .icon-btn {
    width: 33px;
    padding: 0;
}

.icon-btn svg {
    flex: none;
    width: 25px;
    height: 25px;
}

.box {
    height: 31px;
    padding: 0 0 3px 1px;
    background: #ffffa0;
    border: 2px solid #adada0;
    font-family: "Liberation Serif", "Noto Sans CJK SC", serif;
    font-size: 21px;
    line-height: 24px;
    outline: none;
}

.box.white {
    background: #fff;
}

.box.red {
    color: #f00;
}

.w-no { width: 117px; }
.w-times { width: 33px; }
.w-name { width: 93px; }
.w-sex { width: 36px; }
.w-age { width: 48px; }
.w-fee { width: 270px; }
.w-dept { width: 226px; }
.w-bed { width: 50px; }
.w-state { width: 102px; }

.form-row .fields + .fields {
    margin-left: 10px;
}

.confirm {
    flex: 0 0 268px;
    min-width: 0;
    display: flex;
    flex-direction: column;
    justify-content: flex-end;
    gap: 22px;
    padding: 0 24px 17px 18px;
    border-bottom: 2px solid #dedfdc;
    border-right: 2px solid #dedfdc;
}

.disease-input {
    height: 31px;
    min-width: 0;
    margin-left: 19px;
    background: #d5f5f3;
    border: 2px solid #e8e8e8;
    border-top-color: #7b7b7b;
    border-left-color: #7b7b7b;
}

.confirm-buttons {
    display: flex;
    gap: 22px;
}

.confirm-buttons .btn {
    flex: 1;
}

/* status panes */
.pane {
    height: 100%;
    padding: 0 3px;
    white-space: nowrap;
    background: linear-gradient(#dceafd, #c8dcf7 50%, #8fb3e8);
    border: 2px solid #7fa3dc;
    border-bottom: none;
    overflow: hidden;
}

.legend-strip {
    flex: none;
    height: 30px;
    margin-top: 3px;
    display: flex;
    gap: 3px;
    background: #b9d1f4;
    border-bottom: 3px solid #fff;
    line-height: 24px;
}

.over {
    width: 244px;
    color: #f00;
}

.warn {
    width: 378px;
    color: #ff8000;
}

.rest {
    flex: 1;
}

.statusbar {
    flex: none;
    height: 29px;
    display: flex;
    gap: 3px;
    background: #b9d1f4;
    line-height: 24px;
}

.s-user { width: 94px; }
.s-room { width: 168px; }
.s-hosp { width: 273px; }
.s-plat { width: 259px; }
.s-date { width: 214px; }

/* right-hand actions */
.actions {
    flex: 0 0 185px;
    display: grid;
    grid-template-rows: 84px 72px 60px 63px 95px 1fr auto;
    align-items: start;
    padding: 41px 13px 18px 16px;
}

.actions .btn {
    width: 100%;
}

.actions svg {
    width: 24px;
    height: 24px;
    margin-right: 4px;
}

.actions .tall {
    height: 40px;
}

.actions-end {
    display: flex;
    flex-direction: column;
    gap: 75px;
}

.actions .exit {
    width: 144px;
    margin-left: 6px;
}

/* lookup popup */
.lookup {
    position: absolute;
    right: -2px;
    bottom: 141px;
    width: 598px;
    padding: 3px;
    background: #f0f0f0;
    border: 2px solid #a8a8a8;
    overflow: hidden;
}

.lookup-head {
    display: flex;
    height: 31px;
    background: #fff;
    overflow: hidden;
}

.lookup-input {
    width: 141px;
    height: 29px;
    padding-left: 2px;
    border: 2px solid #7b7b7b;
    outline: none;
}

.lookup-code {
    width: 301px;
    flex: none;
    margin-right: 11px;
    border-left: 2px solid #b5b5b5;
    border-top: 1px solid #b5b5b5;
    border-right: 3px solid #f0f0f0;
    font-family: "Liberation Serif", serif;
    font-size: 19px;
    line-height: 22px;
    color: #00148c;
}

.drop {
    flex: none;
    width: 77px;
    height: 31px;
    display: flex;
    align-items: center;
}

.drop::after {
    content: "";
    border: 7px solid transparent;
    border-top: 8px solid #000;
    border-bottom: none;
}

.drop select {
    width: 51px;
    appearance: none;
    border: none;
    background: none;
    outline: none;
}

.lookup-list {
    height: 394px;
    display: flex;
    align-items: stretch;
    justify-content: space-between;
    margin-top: 1px;
    background: #fff;
    border-top: 2px solid #7b7b7b;
    border-left: 2px solid #7b7b7b;
}

.lookup-list .vscroll svg {
    margin: 9px 0;
}

.lookup-list .vscroll .vthumb {
    height: 184px;
}

.lookup-list .vscroll svg.down {
    margin-top: auto;
}

.lookup-table {
    align-self: flex-start;
    width: 563px;
    table-layout: fixed;
    border-collapse: separate;
    border-spacing: 0;
    font-family: "Liberation Serif", "Noto Sans CJK SC", serif;
    font-size: 19px;
}

.lookup-table th {
    height: 30px;
    font-size: 18px;
    font-weight: 400;
    line-height: 26px;
    border-right: 1px solid #111;
    border-bottom: 2px solid #333;
}

.lookup-table td {
    height: 27px;
    padding: 0 4px 0 2px;
    line-height: 24px;
    white-space: nowrap;
    overflow: hidden;
    border-right: 2px solid #c9c9c9;
    border-bottom: 2px solid #d0d0d0;
}

.lookup-table tr:nth-child(even) td {
    background: #f0f5fd;
}

.lookup-table .selected td {
    background: #a0a0a0;
    color: #fff;
}

.l-code { width: 127px; }
.l-name { width: 182px; }
.l-main { width: 167px; }
.l-std { width: 87px; }

/* windows taskbar */
.taskbar {
    flex: none;
    height: 60px;
    display: flex;
    background: linear-gradient(90deg, #0b0d10, #10120f 6%, #343434 14%, #363636);
}

.task-sys, .task-apps, .tray {
    display: flex;
    align-items: center;
}

.task-sys button {
    width: 72px;
    height: 60px;
}

.task-sys svg {
    width: 24px;
    height: 24px;
    vertical-align: middle;
}

.task-apps {
    margin-left: 3px;
}

.task-apps button {
    width: 75px;
    height: 60px;
    padding: 12px 7px 0;
}

.task-apps svg {
    display: block;
    width: 36px;
    height: 36px;
    margin: 0 auto;
}

.task-apps button::after {
    content: "";
    display: block;
    height: 3px;
    margin-top: 9px;
    background: #76b5ee;
}

.task-apps .multi::after {
    background: linear-gradient(90deg, #76b5ee 48px, #5a84c4 48px);
}

.task-apps .active {
    background: linear-gradient(90deg, transparent 3px, #5f5f5d 3px 68px, #4a4a4a 68px 73px, transparent 73px);
}

.tray {
    margin-left: auto;
    color: #fff;
}

.tray svg {
    width: 24px;
    height: 24px;
    margin: 0 6px;
}

.tray .people {
    margin: 0 24px;
}

.tray-lang {
    width: 32px;
    font-size: 21px;
    text-align: center;
}

.tray .tray-sogou {
    margin: 0 15px;
}

.clock {
    width: 124px;
    height: 60px;
    display: flex;
    flex-direction: column;
    align-items: center;
    font-family: "Open Sans", sans-serif;
    font-size: 19px;
    line-height: 28px;
}

.notify {
    position: relative;
    width: 82px;
    height: 60px;
    border-right: 2px solid #777;
    text-align: left;
}

.tray .notify svg {
    margin: 0 0 0 20px;
}

.badge {
    position: absolute;
    left: 32px;
    top: 28px;
    width: 24px;
    height: 24px;
    border: 1px solid #999;
    border-radius: 50%;
    background: #333;
    color: #fff;
    font: 700 18px/22px "Open Sans", sans-serif;
    text-align: center;
}
```

FILE: script.js
```js
const wards = ['病区', '男一区', '男二区', '男三区', '男四区', '女一区', '女二区', '老年区', '儿童康复区', '物质依赖区'];

// bed, inpatient no, name, insurer, admitted, operator, disease code suffix, entered
const patients = [
    ['1-03', '00207080', '陈柳容', '蕉城', '20200520', '管理员2测', '407', '20200610'],
    ['1-07', '00206700', '赖巧文', '蕉城', '20200318', 'ZCQ2632测', '407'],
    ['1-09', '00207136', '孙苹', '蕉城', '20200526', 'CSH1252测', '407'],
    ['1-10', '00207164', '郑秀香', '蕉城', '20200527', 'ZCQ2632测', '407'],
    ['1-11', '00207014', '黄国云', '福安', '20200513', 'WSY0832测', '407'],
    ['1-12', '00207207', '张慧', '蕉城', '20200602', 'LZ0612测', '407'],
    ['1-15', '00207015', '张逸萍', '宁德', '20200513', 'WSY0832测', '407'],
    ['1-16', '00207099', '孙妹妹', '蕉城', '20200521', 'LZ0612测', '407'],
    ['1-20', '00206671', '傅秋容', '蕉城', '20200317', 'GZY3402测', '407'],
    ['1-21', '00207084', '朱志宁', '蕉城', '20200520', 'ZCQ2632测', '407'],
    ['1-22', '00207047', '黄阿燕', '蕉城', '20200519', 'WSY0832测', '407'],
    ['1-23', '00207024', '陈丽玉', '周宁', '20200514', 'WSY0832测', '407'],
    ['1-28', '00207079', '余琼', '古田', '20200520', 'ZCQ2632测', '407'],
    ['1-30', '00207034', '阮丽丽', '蕉城', '20200515', 'CSH1252测', '408'],
    ['1-32', '00207023', '叶丽凤', '周宁', '20200514', 'WSY0832测', '407'],
    ['1-33', '00207031', '马云峰', '蕉城', '20200515', 'CSH1252测', '407'],
    ['1-34', '00206733', '林梅凤', '蕉城', '20200319', 'CSH1252测', '407'],
    ['1-42', '00207032', '刘益廷', '蕉城', '20200515', 'CSH1252测', '407'],
    ['1-43', '00207193', '陈兰妹', '蕉城', '20200528', 'ZCQ2632测', '408'],
    ['1-52', '00207103', '周兰梅', '蕉城', '20200521', 'LZ0612测', '407'],
    ['1-加0', '00207004', '潜祝梅', '周宁', '20200512', 'GZY3402测', '407'],
    ['1-加0', '00207013', '林玲', '蕉城', '20200513', 'WSY0832测', '407'],
    ['1-加1', '00207016', '黄美玲', '蕉城', '20200513', 'WSY0832测', '407'],
    ['1-加1', '00206843', '陈舒秀', '福安', '20200327', 'CSH1252测', '408'],
    ['1-加1', '00207243', '吴玉花', '寿宁', '20200603', 'CSH1252测', '408'],
    ['1-加1', '00207050', '龚贵梅', '蕉城', '20200519', 'WSY0832测', '407'],
    ['2-03', '00206808', '林庆添', '蕉城', '20200326', 'ZCQ2632测', '407'],
    ['2-04', '00206868', '雷德平', '福安', '20200331', 'ZCQ2632测', '407'],
    ['2-13', '00206939', '吴允寿', '蕉城', '20200416', 'CSH1252测', '407']
];

function cell(text, cls) {
    return `<td class="${cls || ''}"><span>${text}</span></td>`;
}

document.getElementById('patient-rows').innerHTML = patients.map((p, i) => {
    const male = p[0].startsWith('2');
    const mood = p[6] === '408';
    return '<tr>' +
        cell(i + 1, 'idx') +
        cell('已进入') +
        cell(male ? '男二区' : '女二区') +
        cell(male ? '男二科' : '女二科') +
        cell(p[0]) +
        cell(p[1]) +
        cell(1, 'num') +
        cell(p[2]) +
        cell(male ? '男' : '女') +
        cell(p[3] + '医疗保险管') +
        cell(p[4]) +
        cell('BZND00' + p[6], 'code') +
        cell(mood ? '双向情感障碍' : '精神分裂症') +
        cell(p[7] || p[4]) +
        cell(p[5], i === 0 ? '' : 'code') +
        cell('') +
        cell(mood ? 178 : 189, 'num') +
        cell('') +
        '</tr>';
}).join('');

document.getElementById('ward-list').innerHTML = wards.map((name, i) => {
    const toggle = i === 0
        ? '<i class="dots long"></i>'
        : '<button type="button" class="toggle" aria-label="展开">+</button><i class="dots"></i>';
    return `<li>${toggle}<svg><use href="#i-folder"/></svg><span>${name}</span></li>`;
}).join('');
```
